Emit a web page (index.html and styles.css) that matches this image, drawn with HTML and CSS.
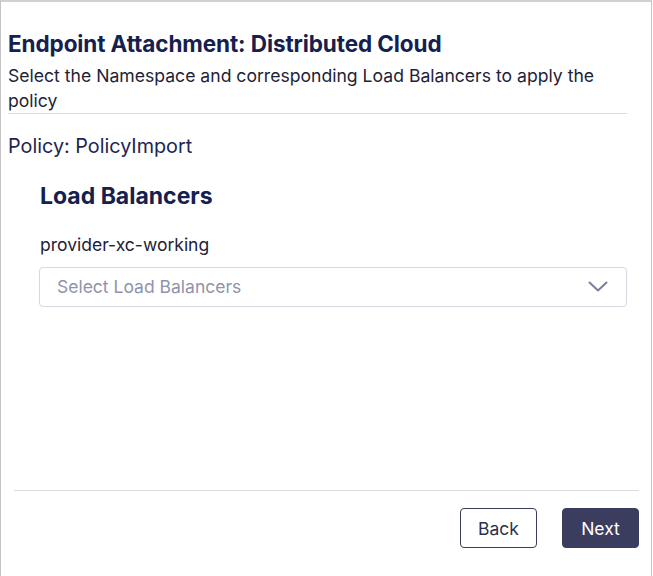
FILE: index.html
```html
<!DOCTYPE html>
<html>
<head>
<meta charset="utf-8">
<link rel="stylesheet" href="styles.css">
</head>
<body>
<div class="frame">
  <div class="content">
    <h1 class="title">Endpoint Attachment: Distributed Cloud</h1>
    <p class="subtitle">Select the Namespace and corresponding Load Balancers to apply the policy</p>
    <div class="policy">Policy: PolicyImport</div>
    <div class="section">
      <h2 class="section-title">Load Balancers</h2>
      <div class="ns">provider-xc-working</div>
      <div class="select">
        <span class="placeholder">Select Load Balancers</span>
        <svg class="chev" width="20" height="12" viewBox="0 0 20 12"><path d="M1.5 1.5 L10 9.5 L18.5 1.5" fill="none" stroke="#7a7f9e" stroke-width="2" stroke-linecap="round" stroke-linejoin="round"/></svg>
      </div>
    </div>
  </div>
  <div class="footer">
    <button class="btn btn-back">Back</button>
    <button class="btn btn-next">Next</button>
  </div>
</div>
</body>
</html>
```
FILE: styles.css
```css
* { box-sizing: border-box; }
html, body { margin: 0; padding: 0; background: #fff; }
body { font-family: Inter, "Noto Sans", sans-serif; color: #1b2150; }
.frame {
  width: 652px;
  height: 576px;
  border-top: 2px solid #d0d0d0;
  border-left: 1px solid #c4c4c4;
  border-right: 1px solid #c4c4c4;
  display: flex;
  flex-direction: column;
}
.content {
  padding: 28px 24px 0 7px;
  flex: 1;
}
.title {
  margin: 0;
  font-size: 22.5px;
  font-weight: 700;
  line-height: 28px;
  letter-spacing: -0.1px;
  color: #15204e;
}
.subtitle {
  margin: 4.5px 0 0 0;
  font-size: 17.6px;
  line-height: 25px;
  color: #1d2238;
  padding-bottom: 0;
  border-bottom: 1px solid #dcdcdc;
}
.policy {
  margin-top: 20px;
  font-size: 19.8px;
  line-height: 24px;
  color: #1e2551;
}
.section {
  padding: 0 0 0 31px;
  margin-top: 24px;
}
.section-title {
  margin: 0 0 0 1px;
  font-size: 23px;
  font-weight: 700;
  line-height: 28px;
  color: #15204e;
}
.ns {
  margin: 24px 0 0 1px;
  font-size: 17.5px;
  line-height: 22px;
  color: #1d2238;
}
.select {
  margin-top: 11px;
  height: 40px;
  border: 1px solid #d8d8e0;
  border-radius: 4px;
  display: flex;
  align-items: center;
  justify-content: space-between;
  padding: 0 18px 0 17px;
}
.placeholder {
  font-size: 17.5px;
  color: #8f93ad;
}
.chev { display: block; margin-top: 1px; }
.footer {
  margin: 0 12px 0 13px;
  border-top: 1px solid #dcdcdc;
  height: 86px;
  display: flex;
  justify-content: flex-end;
  align-items: flex-start;
  gap: 25px;
  padding-top: 17px;
}
.btn {
  height: 40px;
  font-family: Inter, "Noto Sans", sans-serif;
  font-size: 17.5px;
  border-radius: 4px;
  padding: 0;
  cursor: pointer;
}
.btn-back {
  width: 77px;
  background: #fff;
  color: #2b3050;
  border: 1px solid #3a3d5c;
}
.btn-next {
  width: 77px;
  background: #3b3d5f;
  color: #fff;
  border: 1px solid #3b3d5f;
}
```
